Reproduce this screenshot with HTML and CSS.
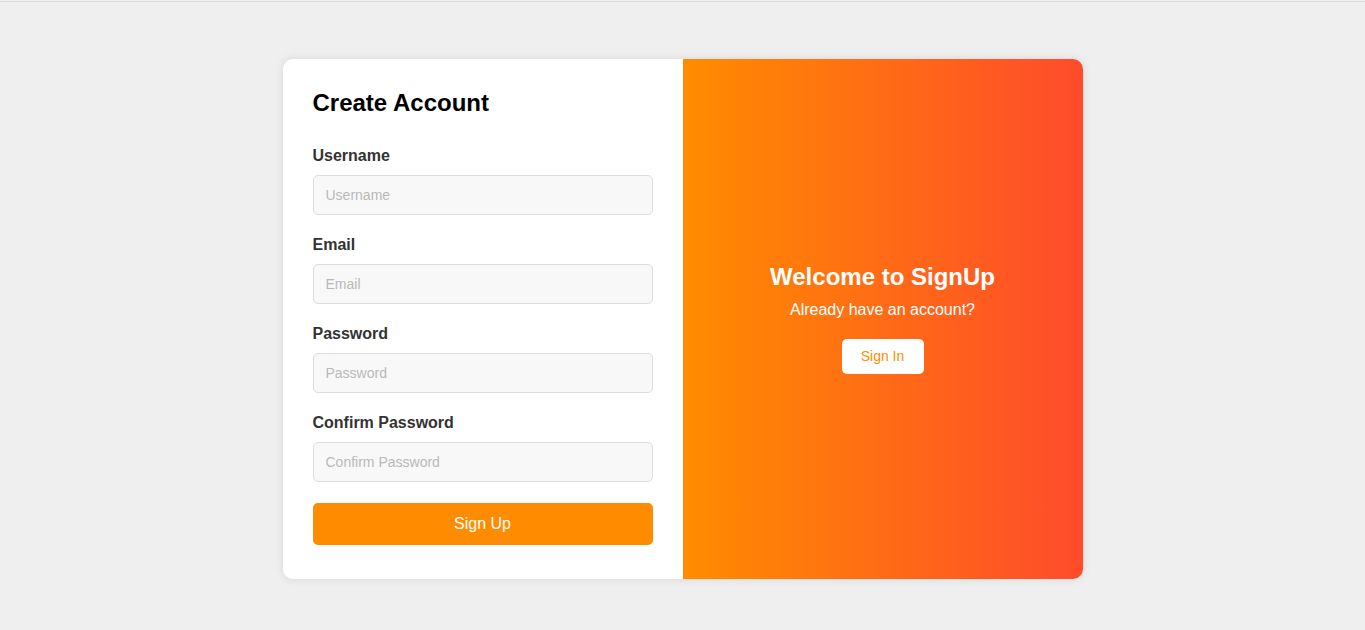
FILE: index.html
```html
<!DOCTYPE html>
<html>
<head>
<meta charset="utf-8">
<link rel="stylesheet" href="styles.css">
</head>
<body>
<div class="topline"></div>
<main class="page">
  <div class="card">
    <section class="form-panel">
      <h2 class="title">Create Account</h2>
      <form class="form">
        <div class="group">
          <label class="label">Username</label>
          <input class="input" type="text" placeholder="Username">
        </div>
        <div class="group">
          <label class="label">Email</label>
          <input class="input" type="email" placeholder="Email">
        </div>
        <div class="group">
          <label class="label">Password</label>
          <input class="input" type="password" placeholder="Password">
        </div>
        <div class="group">
          <label class="label">Confirm Password</label>
          <input class="input" type="password" placeholder="Confirm Password">
        </div>
        <button class="submit" type="button">Sign Up</button>
      </form>
    </section>
    <section class="welcome">
      <h2 class="welcome-title">Welcome to SignUp</h2>
      <p class="welcome-text">Already have an account?</p>
      <button class="signin" type="button">Sign In</button>
    </section>
  </div>
</main>
</body>
</html>
```
FILE: styles.css
```css
* { box-sizing: border-box; }
html, body { margin: 0; padding: 0; }
body {
  background: #efefef;
  font-family: "Liberation Sans", Arial, sans-serif;
  height: 630px;
  overflow: hidden;
}
.topline {
  height: 2px;
  border-top: 1px solid #efefef;
  border-bottom: 1px solid #dcdcdc;
}
.page {
  display: flex;
  justify-content: center;
  padding-top: 57px;
}
.card {
  width: 800px;
  height: 520px;
  display: flex;
  background: #fff;
  border-radius: 10px;
  overflow: hidden;
  box-shadow: 0 0 10px rgba(0,0,0,0.1);
}
.form-panel {
  width: 400px;
  padding: 30px 30px 34px;
}
.title {
  margin: 0 0 29px;
  font-size: 24px;
  line-height: 28px;
  font-weight: bold;
  color: #000;
}
.form { display: flex; flex-direction: column; }
.group { margin-bottom: 20px; }
.label {
  display: block;
  font-size: 16px;
  line-height: 19px;
  font-weight: bold;
  color: #333;
  margin-bottom: 10px;
}
.input {
  display: block;
  width: 100%;
  height: 40px;
  padding: 0 12px;
  background: #f8f8f8;
  border: 1px solid #ddd;
  border-radius: 5px;
  font-family: "Liberation Sans", Arial, sans-serif;
  font-size: 14px;
  color: #333;
  outline: none;
}
.input::placeholder { color: #b8b8b8; }
.submit {
  margin-top: 1px;
  height: 42px;
  width: 100%;
  border: none;
  border-radius: 5px;
  background: #ff8c00;
  color: #fff;
  font-family: "Liberation Sans", Arial, sans-serif;
  font-size: 16px;
}
.welcome {
  width: 400px;
  display: flex;
  flex-direction: column;
  align-items: center;
  justify-content: center;
  padding-bottom: 2px;
  background: linear-gradient(to right, #ff8c00, #ff4b2b);
  color: #fff;
  text-align: center;
}
.welcome-title {
  margin: 0 0 10px;
  font-size: 24px;
  line-height: 28px;
  font-weight: bold;
}
.welcome-text {
  margin: 0 0 20px;
  font-size: 16px;
  line-height: 18px;
}
.signin {
  width: 82px;
  height: 35px;
  border: none;
  border-radius: 5px;
  background: #fff;
  color: #ff8c00;
  font-family: "Liberation Sans", Arial, sans-serif;
  font-size: 14px;
  line-height: 17px;
  padding: 0;
}
```
